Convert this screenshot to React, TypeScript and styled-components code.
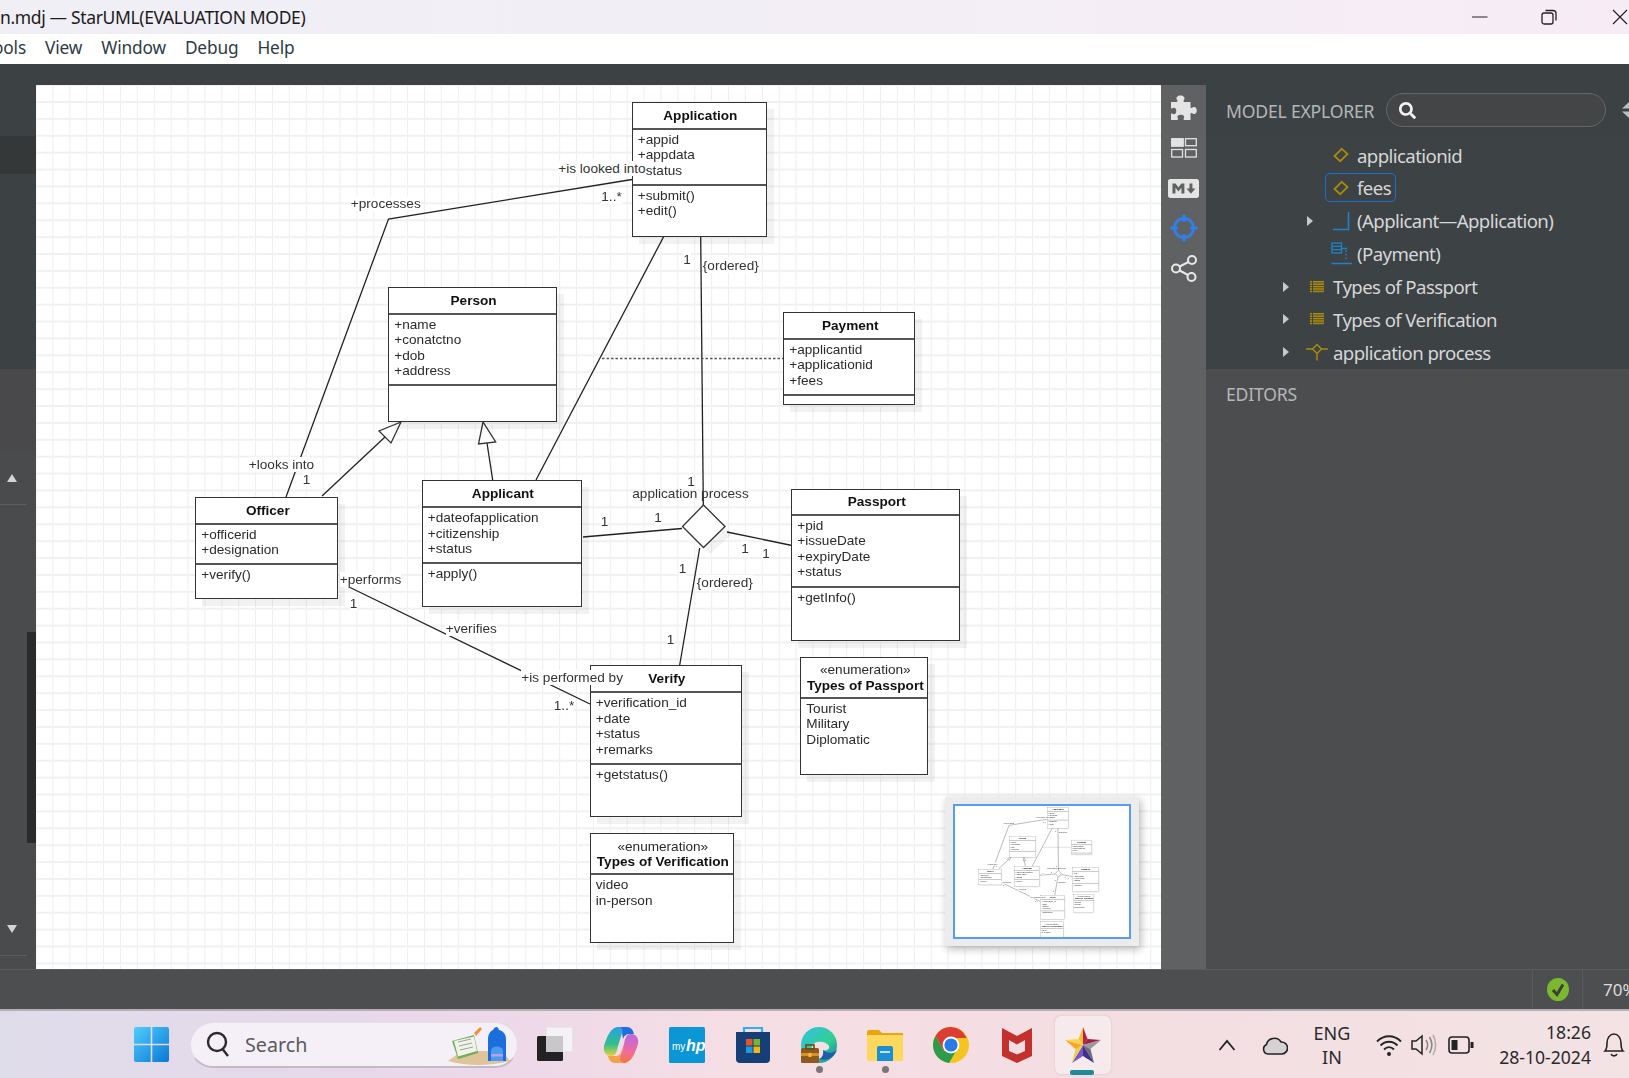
import React from "react";
import styled, { createGlobalStyle } from "styled-components";
import { FaMarkdown, FaSearch } from "react-icons/fa";

const Global = createGlobalStyle`
  html, body { margin: 0; padding: 0; overflow: hidden; background: #3c4144; }
  * { box-sizing: border-box; }
`;
const UI = `"Noto Sans", "Open Sans", sans-serif`;
const UML = `"Liberation Sans", Arial, sans-serif`;

const Page = styled.div`
  width: 1629px; height: 1078px; display: flex; flex-direction: column; overflow: hidden; font-family: ${UI};
`;
const TitleBar = styled.header`
  height: 34px; flex: none; display: flex; align-items: center; justify-content: space-between;
  background: linear-gradient(90deg, #f0eff6 0%, #f3eef6 55%, #f7ecf5 100%);
  font-size: 17.5px; letter-spacing: -0.35px; color: #1b1b1b; white-space: nowrap;
`;
const WindowButtons = styled.div`display: flex; align-items: center; padding-right: 1px;`;
const WinBtn = styled.span<{ $w: number }>`width: ${p => p.$w}px; height: 34px; display: flex; align-items: center; justify-content: flex-end;`;
const MenuBar = styled.nav`
  height: 30px; flex: none; background: #fff; display: flex; align-items: center; gap: 19px; margin-left: -7px; padding-bottom: 3px;
  font-size: 17.3px; color: #2c3a45; letter-spacing: -0.15px;
`;
const Strip = styled.div`height: 21px; flex: none; background: #3c4144;`;
const Main = styled.main`flex: none; height: 884px; display: flex;`;

const LeftPanel = styled.aside`width: 36px; flex: none; display: flex; flex-direction: column; background: #4a4b4d;`;
const LeftBand = styled.div<{ $h: number; $bg: string }>`height: ${p => p.$h}px; flex: none; background: ${p => p.$bg};`;
const LeftLower = styled.div`flex: 1; position: relative; display: flex; flex-direction: column; align-items: flex-start;`;
const ScrollArrow = styled.div<{ $down?: boolean; $mt: number }>`
  width: 0; height: 0; margin: ${p => p.$mt}px 0 0 7px;
  border-left: 5.5px solid transparent; border-right: 5.5px solid transparent;
  ${p => p.$down ? "border-top: 8px solid #d4d4d5;" : "border-bottom: 8px solid #d4d4d5;"}
`;
const ScrollRule = styled.div<{ $mt: number }>`width: 27px; height: 1px; background: #5c5d5f; margin-top: ${p => p.$mt}px;`;
const ScrollThumb = styled.div`width: 9px; height: 211px; margin: 127px 0 0 27px; background: #2a2a2b;`;

const Canvas = styled.section`
  width: 1125px; flex: none; position: relative; overflow: hidden; background-color: #fff;
  background-image:
    linear-gradient(#f1f1f1 2px, transparent 2px),
    linear-gradient(90deg, #eeeeee 1px, transparent 1px);
  background-size: 16.9px 16.9px;
  background-position: 16.4px 16px;
`;
const Layer = styled.div`position: absolute; left: -36.2px; top: -85px; width: 1629px; height: 1078px; filter: blur(0.3px);`;
const Edges = styled.svg`position: absolute; inset: 0; width: 1629px; height: 1078px;`;
const ClassBox = styled.div<{ $x: number; $y: number; $w: number; $h: number }>`
  position: absolute; left: ${p => p.$x}px; top: ${p => p.$y}px; width: ${p => p.$w}px; height: ${p => p.$h}px;
  display: flex; flex-direction: column; background: #fff; border: 1.5px solid #333;
  box-shadow: 7px 7px 0 rgba(0,0,0,.05); font: 13.6px/15.5px ${UML}; color: #2a2a2a;
`;
const ClassHead = styled.div<{ $h: number }>`
  height: ${p => p.$h}px; flex: none; display: flex; flex-direction: column; align-items: center; justify-content: center;
  border-bottom: 2px solid #555; white-space: nowrap; padding: 1px 0 0 2px;
`;
const ClassName = styled.b`font-weight: 700; color: #111;`;
const Compartment = styled.div<{ $h?: number }>`
  ${p => p.$h ? `height: ${p.$h}px; flex: none; border-bottom: 2px solid #555;` : "flex: 1;"}
  padding: 2.2px 0 0 5px; white-space: nowrap;
`;
const EdgeLabel = styled.span<{ $x: number; $y: number; $clear?: boolean }>`
  position: absolute; left: ${p => p.$x}px; top: ${p => p.$y - 7.5}px; font: 13.6px/15px ${UML}; color: #333;
  background: ${p => p.$clear ? "transparent" : "#fff"}; white-space: nowrap;
`;
const MiniMap = styled.div`
  position: absolute; left: 909px; top: 712px; width: 194px; height: 149px; padding: 7px 8px;
  background: #ececec; box-shadow: 2px 3px 8px rgba(0,0,0,.28); display: flex;
`;
const MiniView = styled.div`flex: 1; position: relative; overflow: hidden; background: #fff; border: 2px solid #5b9bf0;`;
const MiniScale = styled.div`position: absolute; left: -7.5px; top: -15.3px; transform-origin: 0 0; transform: scale(.157); width: 1629px; height: 1078px;`;

const Rail = styled.div`width: 45px; flex: none; background: #606163; display: flex; flex-direction: column; align-items: center; padding-top: 10px; gap: 14px; color: #e4e4e4;`;
const RailSlot = styled.span`height: 26px; display: flex; align-items: center; justify-content: center;`;
const RightPanel = styled.aside`flex: 1; display: flex; flex-direction: column; min-width: 0;`;
const ExplorerHead = styled.div`height: 51px; flex: none; background: #3c4144; display: flex; align-items: center; padding: 0 0 1px 20px;`;
const PanelTitle = styled.span`font-size: 17.6px; letter-spacing: -0.2px; color: #b4b7b8; white-space: nowrap; flex: none;`;
const HeadTitle = styled(PanelTitle)`padding-top: 2px;`;
const SearchPill = styled.div`
  width: 220px; height: 34px; margin-left: 12px; border: 1px solid #62676a; border-radius: 17px; background: #444546;
  display: flex; align-items: center; padding-left: 12px; color: #f2f2f2; flex: none;
`;
const SortArrows = styled.svg`margin-left: 16px; flex: none;`;
const Tree = styled.div`height: 233px; flex: none; background: #3d4245; padding-top: 2.6px; display: flex; flex-direction: column;`;
const TreeRow = styled.div<{ $depth: number }>`height: 32.9px; flex: none; display: flex; align-items: center; padding-left: ${p => 46 + p.$depth * 24}px;`;
const ToggleCell = styled.span`width: 20px; flex: none; display: flex; justify-content: center;`;
const Toggle = styled.i`width: 0; height: 0; border-top: 5.5px solid transparent; border-bottom: 5.5px solid transparent; border-left: 6px solid #c8c9ca;`;
const TreeItem = styled.span<{ $sel?: boolean }>`
  margin-left: 5px; height: 29px; display: inline-flex; align-items: center; padding-right: 4px; border-radius: 5px;
  border: 1px solid ${p => p.$sel ? "#1a6fd6" : "transparent"};
  font-size: 18.6px; letter-spacing: -0.58px; color: #d6d7d8; white-space: nowrap;
`;
const TreeIcon = styled.span`width: 30px; flex: none; display: flex; justify-content: center; align-items: center; margin-right: 1px;`;
const EditorsPanel = styled.div`flex: 1; background: #4c4d4f; padding: 13px 0 0 20px;`;

const StatusBar = styled.footer`height: 40px; flex: none; background: #4d4e50; border-top: 1px solid #5a5b5d; display: flex; justify-content: flex-end;`;
const StatusCell = styled.div<{ $w: number }>`width: ${p => p.$w}px; flex: none; border-left: 1px solid #595a5c; display: flex; align-items: center; padding-left: 14px;`;
const Zoom = styled.span`font-size: 17px; color: #dcdcdc; white-space: nowrap; margin-left: 6px;`;

const Taskbar = styled.div`
  flex: 1; display: flex; align-items: center; padding-left: 118px; border-top: 2px solid #b6b0b6;
  background: linear-gradient(90deg, #dfdcea 0%, #e5d9ea 18%, #ecd8e9 30%, #f5dee4 45%, #f3dee2 70%, #f3e3e5 100%);
`;
const Slot = styled.div`width: 66px; height: 67px; flex: none; position: relative; display: flex; align-items: center; justify-content: center;`;
const Tile = styled.div`position: absolute; left: 5px; top: 5px; width: 56px; height: 58px; background: #f6eaec; border-radius: 6px; box-shadow: 0 0 2px rgba(150,110,120,.35);`;
const RunDot = styled.i`position: absolute; left: 30px; bottom: 5px; width: 7px; height: 7px; border-radius: 50%; background: #7b7577;`;
const ActiveBar = styled.i`position: absolute; left: 20px; bottom: 3px; width: 24px; height: 5px; border-radius: 2px; background: #1f8a9a;`;
const SlotIcon = styled.svg`position: relative;`;
const SearchBox = styled.div`
  width: 328px; height: 46px; margin: 0 4px 0 6px; flex: none; border-radius: 23px; background: #f5f0f8; position: relative;
  border: 1px solid #e3dde6; border-bottom: 2px solid #c3bac6; display: flex; align-items: center; padding-left: 15px; gap: 15px;
  font-size: 19.7px; color: #5a5a5c;
`;
const SearchArt = styled.svg`position: absolute; right: 5px; top: 4px;`;
const TrayCell = styled.div<{ $w: number; $pad?: number }>`
  width: ${p => p.$w}px; height: 67px; flex: none; display: flex; align-items: center;
  ${p => p.$pad ? `justify-content: flex-end; padding-right: ${p.$pad}px;` : "justify-content: center;"}
`;
const Lang = styled.div`font-size: 18px; line-height: 24px; text-align: center; color: #2a2a2c;`;
const Clock = styled.div`width: 111px; flex: none; font-size: 17.6px; line-height: 25px; text-align: right; color: #2a2a2c; white-space: nowrap;`;
const Offset = styled.svg`margin-left: 8px;`;

type Cls = { x: number; y: number; w: number; h: number; head: number; attrH: number; stereo?: string; name: string; attrs: string[]; ops?: string[] };
const classes: Cls[] = [
  { x: 632, y: 101.5, w: 135, h: 135, head: 27, attrH: 56, name: "Application", attrs: ["+appid", "+appdata", "+status"], ops: ["+submit()", "+edit()"] },
  { x: 388.5, y: 286.5, w: 168.5, h: 135.5, head: 27, attrH: 71, name: "Person", attrs: ["+name", "+conatctno", "+dob", "+address"], ops: [] },
  { x: 783.5, y: 311.5, w: 132, h: 93, head: 27, attrH: 56, name: "Payment", attrs: ["+applicantid", "+applicationid", "+fees"], ops: [] },
  { x: 195.5, y: 496.5, w: 143, h: 102, head: 27, attrH: 40, name: "Officer", attrs: ["+officerid", "+designation"], ops: ["+verify()"] },
  { x: 422, y: 480, w: 160, h: 126.5, head: 27, attrH: 55.5, name: "Applicant", attrs: ["+dateofapplication", "+citizenship", "+status"], ops: ["+apply()"] },
  { x: 791.5, y: 488.5, w: 169, h: 152, head: 26, attrH: 72, name: "Passport", attrs: ["+pid", "+issueDate", "+expiryDate", "+status"], ops: ["+getInfo()"] },
  { x: 590, y: 665, w: 152, h: 152, head: 27, attrH: 71.5, name: "Verify", attrs: ["+verification_id", "+date", "+status", "+remarks"], ops: ["+getstatus()"] },
  { x: 800.5, y: 656.5, w: 128, h: 118, head: 41, attrH: 0, stereo: "«enumeration»", name: "Types of Passport", attrs: ["Tourist", "Military", "Diplomatic"] },
  { x: 590, y: 833, w: 144, h: 110, head: 41, attrH: 0, stereo: "«enumeration»", name: "Types of Verification", attrs: ["video", "in-person"] },
];
const labels: [string, number, number, boolean?][] = [
  ["+processes", 351, 203.5], ["+is looked into", 558.5, 168], ["1..*", 601.5, 196], ["1", 683.5, 259.5], ["{ordered}", 703, 265.5],
  ["+looks into", 249, 464], ["1", 303, 479], ["1", 687.5, 481, true], ["application process", 632.5, 493, true],
  ["1", 601, 521], ["1", 654.5, 517], ["1", 741.5, 548], ["1", 762.5, 553], ["1", 679, 568], ["{ordered}", 697, 582],
  ["1", 667, 639], ["+performs", 340, 579.5], ["1", 350, 603], ["+verifies", 446, 628.5], ["+is performed by", 521.5, 677.5], ["1..*", 554, 705.5],
];

const Diagram = ({ stroke = 1.3 }: { stroke?: number }) => (
  <>
    <Edges viewBox="0 0 1629 1078">
      <g fill="none" stroke="#222" strokeWidth={stroke}>
        <polyline points="286,497 388.5,219 632,179.5" />
        <line x1="322" y1="496" x2="385" y2="437" />
        <line x1="492.7" y1="480" x2="487" y2="443" />
        <line x1="536" y1="480" x2="664" y2="236" />
        <line x1="700.7" y1="236" x2="703.3" y2="505" />
        <line x1="583" y1="537" x2="682" y2="528.5" />
        <line x1="727" y1="532" x2="792" y2="545.5" />
        <line x1="699.7" y1="548" x2="679.7" y2="665" />
        <line x1="348" y1="586.5" x2="590" y2="704" />
        <line x1="602" y1="358.5" x2="783.5" y2="358.5" strokeDasharray="2.5 2" stroke="#555" />
      </g>
      <g fill="#fff" stroke="#333" strokeWidth={stroke}>
        <polygon points="401,422 379,431 391,443" />
        <polygon points="483,422 478.5,444 495.7,442" />
      </g>
      <polygon points="710,512 732,534 710,554 689,534" fill="#000" fillOpacity=".05" />
      <polygon points="703.5,505 725,526.5 703.5,547.5 682.5,526.5" fill="#fff" stroke="#333" strokeWidth={stroke} />
    </Edges>
    {classes.map(c => (
      <ClassBox key={c.name} $x={c.x} $y={c.y} $w={c.w} $h={c.h}>
        <ClassHead $h={c.head}>
          {c.stereo && <span>{c.stereo}</span>}
          <ClassName>{c.name}</ClassName>
        </ClassHead>
        <Compartment $h={c.attrH || undefined}>{c.attrs.map(a => <div key={a}>{a}</div>)}</Compartment>
        {c.ops && <Compartment>{c.ops.map(a => <div key={a}>{a}</div>)}</Compartment>}
      </ClassBox>
    ))}
    {labels.map(([t, x, y, clear], i) => <EdgeLabel key={i} $x={x} $y={y} $clear={clear}>{t}</EdgeLabel>)}
  </>
);

const gold = "#a88a0a";
const blue = "#1f82c9";
const AttrIcon = () => (
  <svg width="16" height="16" viewBox="0 0 16 16"><polygon points="8.8,1.8 14.5,7 7.2,14.2 1.5,9" fill="none" stroke={gold} strokeWidth="1.8" /></svg>
);
const LinkIcon = () => (
  <svg width="18" height="20" viewBox="0 0 18 20"><path d="M1 18.5H16.5V1" fill="none" stroke={blue} strokeWidth="1.6" /></svg>
);
const AssocClassIcon = () => (
  <svg width="24" height="24" viewBox="0 0 24 24" fill="none" stroke={blue} strokeWidth="1.3">
    <rect x="3" y="1" width="9.5" height="10" /><path d="M3 4.4H12.5M3 7.7H12.5" />
    <path d="M17 8V18" strokeDasharray="2 1.6" /><path d="M13 6.5H18M2.5 21.5H23" />
  </svg>
);
const EnumIcon = () => (
  <svg width="14" height="12" viewBox="0 0 14 12" fill={gold}>
    {[0, 2.4, 4.8, 7.2, 9.6].map(y => <g key={y}><rect x="0" y={y} width="2" height="1.6" /><rect x="3" y={y} width="11" height="1.6" /></g>)}
  </svg>
);
const ProcessIcon = () => (
  <svg width="24" height="18" viewBox="0 0 24 18" fill="none" stroke={gold} strokeWidth="1.5">
    <path d="M1 6H7.5M16.5 6H23M12 10.5V17.5" /><polygon points="12,1.5 16.5,6 12,10.5 7.5,6" />
  </svg>
);
const treeRows = [
  { depth: 2, text: "applicationid", icon: <AttrIcon /> },
  { depth: 2, text: "fees", icon: <AttrIcon />, sel: true },
  { depth: 2, text: "(Applicant—Application)", icon: <LinkIcon />, toggle: true },
  { depth: 2, text: "(Payment)", icon: <AssocClassIcon /> },
  { depth: 1, text: "Types of Passport", icon: <EnumIcon />, toggle: true },
  { depth: 1, text: "Types of Verification", icon: <EnumIcon />, toggle: true },
  { depth: 1, text: "application process", icon: <ProcessIcon />, toggle: true },
];

const PuzzleIcon = () => (
  <svg width="27" height="26" viewBox="0 0 27 26">
    <path d="M1 7H6.5C8 7 7.5 5.5 6.8 4.5C5.6 2.5 7.8 0.5 10.5 0.5C13.2 0.5 15.4 2.5 14.2 4.5C13.5 5.5 13 7 14.5 7H20.5V12C20.5 13.5 22 13 23 12.3C25 11.2 26.8 13 26.8 15.5C26.8 18 25 19.8 23 18.7C22 18 20.5 17.5 20.5 19V25H14.5C13 25 13.5 23.5 14 22.7C14.8 21 13 19.8 10.8 19.8C8.6 19.8 6.8 21 7.6 22.7C8.1 23.5 8.6 25 7 25H1V19.5C1 18 2.5 18.5 3.2 19C5 19.8 6.3 18.2 6.3 16C6.3 13.8 5 12.2 3.2 13C2.5 13.5 1 14 1 12.5Z" fill="#e4e4e4" />
  </svg>
);
const GridIcon = () => (
  <svg width="26" height="20" viewBox="0 0 26 20" fill="none" stroke="#e2e2e2" strokeWidth="1.3">
    <rect x="0.7" y="0.7" width="11.5" height="7.5" fill="#e2e2e2" /><rect x="14.5" y="0.7" width="10.8" height="7" />
    <rect x="0.7" y="11.5" width="10.8" height="7.5" /><rect x="14.5" y="11.5" width="10.8" height="7.5" />
  </svg>
);
const CrossIcon = () => (
  <svg width="28" height="28" viewBox="0 0 28 28" fill="none" stroke="#2f80ed" strokeWidth="2.8">
    <circle cx="14" cy="14" r="9.5" /><path d="M14 0.5V8M14 20V27.5M0.5 14H8M20 14H27.5" />
  </svg>
);
const ShareIcon = () => (
  <svg width="28" height="28" viewBox="0 0 28 28" fill="none" stroke="#e8e8e8" strokeWidth="2">
    <circle cx="22" cy="6" r="4" /><circle cx="6" cy="14.5" r="4" /><circle cx="21.5" cy="23" r="4" />
    <path d="M9.6 12.5L18.5 8M9.6 16.5L18 21" />
  </svg>
);

const StartIcon = () => (
  <SlotIcon width="35" height="35" viewBox="0 0 35 35">
    <defs><linearGradient id="w" x1="0" y1="0" x2="1" y2="1"><stop offset="0" stopColor="#4fcdfc" /><stop offset="1" stopColor="#0a78d6" /></linearGradient></defs>
    <path d="M2 0H16.7V16.7H0V2A2 2 0 0 1 2 0ZM18.3 0H33A2 2 0 0 1 35 2V16.7H18.3ZM0 18.3H16.7V35H2A2 2 0 0 1 0 33ZM18.3 18.3H35V33A2 2 0 0 1 33 35H18.3Z" fill="url(#w)" />
  </SlotIcon>
);
const TaskViewIcon = () => (
  <SlotIcon width="38" height="36" viewBox="0 0 38 36">
    <rect x="10" y="0" width="27" height="25" rx="1.5" fill="#f4f2f4" stroke="#dddadd" />
    <rect x="1" y="9" width="26" height="25" rx="1.5" fill="#222" />
    <rect x="10" y="9" width="17" height="16" fill="#c9c7c9" />
  </SlotIcon>
);
const CopilotIcon = () => (
  <SlotIcon width="36" height="38" viewBox="0 0 36 38">
    <defs>
      <linearGradient id="c1" x1="0" y1="0" x2="0" y2="1"><stop offset="0" stopColor="#2a9fe8" /><stop offset=".6" stopColor="#2fc08a" /><stop offset="1" stopColor="#e9d23a" /></linearGradient>
      <linearGradient id="c2" x1="0" y1="0" x2="0" y2="1"><stop offset="0" stopColor="#b56be0" /><stop offset=".6" stopColor="#f06aa0" /><stop offset="1" stopColor="#f5773a" /></linearGradient>
    </defs>
    <path d="M14 1C8 2 4 10 1 20C0 26 3 30 8 30C13 30 14 25 15 20L19 7C20 3 18 1 14 1Z" fill="url(#c1)" />
    <path d="M22 37C28 36 32 28 35 18C36 12 33 8 28 8C23 8 22 13 21 18L17 31C16 35 18 37 22 37Z" fill="url(#c2)" />
    <path d="M14 1H24C28 1 30 4 31 8H27C23 8 21 10 20 13L19 7C20 3 18 1 14 1Z" fill="#1f6fe0" />
    <path d="M12 30C16 30 18 28 19 24L21 22L17 31C16 35 18 37 22 37H12C8 37 6 34 5 30Z" fill="#f5a04a" />
  </SlotIcon>
);
const HpIcon = () => (
  <SlotIcon width="36" height="36" viewBox="0 0 36 36">
    <rect width="36" height="36" rx="1.5" fill="#0b96d6" />
    <text x="3" y="23" fill="#fff" fontFamily="Liberation Sans" fontSize="10">my</text>
    <text x="17" y="24" fill="#fff" fontFamily="Liberation Sans" fontStyle="italic" fontWeight="700" fontSize="16">hp</text>
  </SlotIcon>
);
const StoreIcon = () => (
  <SlotIcon width="36" height="38" viewBox="0 0 36 38">
    <path d="M9 7V2H27V7" fill="none" stroke="#2bb2ea" strokeWidth="2.2" />
    <path d="M1 6H35V33A4 4 0 0 1 31 37H5A4 4 0 0 1 1 33Z" fill="#163f78" />
    <rect x="11" y="13" width="6.5" height="6.5" fill="#e8512a" /><rect x="18.5" y="13" width="6.5" height="6.5" fill="#75b82a" />
    <rect x="11" y="20.5" width="6.5" height="6.5" fill="#1a9be0" /><rect x="18.5" y="20.5" width="6.5" height="6.5" fill="#f5b40f" />
  </SlotIcon>
);
const EdgeIcon = () => (
  <SlotIcon width="38" height="38" viewBox="0 0 38 38">
    <defs><linearGradient id="e1" x1="0" y1="0" x2="1" y2="1"><stop offset="0" stopColor="#35c1e8" /><stop offset=".6" stopColor="#2fd08f" /><stop offset="1" stopColor="#1d6fb0" /></linearGradient></defs>
    <circle cx="19" cy="19" r="18" fill="url(#e1)" />
    <path d="M12 20C14 15 25 14 29 20C30 23 27 25 23 24C25 29 23 33 19 33C14 32 11 26 12 20Z" fill="#f5dee4" />
    <path d="M19 33C28 36 35 30 37 24C34 27 28 28 23 24C24 28 22 32 19 33Z" fill="#1c5fa8" />
    <rect x="1" y="22" width="18" height="15" rx="1.5" fill="#8c5a1e" /><rect x="1" y="27" width="18" height="3" fill="#d8902a" />
    <rect x="6" y="19" width="8" height="4" fill="none" stroke="#6f4614" strokeWidth="1.6" /><rect x="8.5" y="27" width="3" height="4" fill="#f3c03d" />
  </SlotIcon>
);
const FilesIcon = () => (
  <SlotIcon width="36" height="32" viewBox="0 0 36 32">
    <path d="M0 3A2 2 0 0 1 2 1H12L15 4H36V30H0Z" fill="#e8a50e" />
    <rect x="0" y="6" width="36" height="26" rx="1" fill="#fcd95e" />
    <path d="M10 19A2 2 0 0 1 12 17H24A2 2 0 0 1 26 19V32H10Z" fill="#1b8fd6" /><rect x="13" y="22" width="10" height="2" fill="#bfe5fa" />
  </SlotIcon>
);
const ChromeIcon = () => (
  <SlotIcon width="36" height="36" viewBox="0 0 36 36">
    <circle cx="18" cy="18" r="18" fill="#f5c51f" />
    <path d="M18 0A18 18 0 0 0 2.4 9L11 24L18 11H33.6A18 18 0 0 0 18 0Z" fill="#db3d33" />
    <path d="M2.4 9A18 18 0 0 0 16 35.9L24.5 21.5L11 24Z" fill="#2d9b4b" />
    <circle cx="18" cy="18" r="8.4" fill="#fff" /><circle cx="18" cy="18" r="6.6" fill="#2a7be8" />
  </SlotIcon>
);
const McAfeeIcon = () => (
  <SlotIcon width="32" height="36" viewBox="0 0 32 36">
    <path d="M16 36L1 29V1L16 9L31 1V29ZM8 24L16 27.5L24 24V13L16 17.5L8 13Z" fill="#c4302b" fillRule="evenodd" />
  </SlotIcon>
);
const StarIcon = () => (
  <SlotIcon width="36" height="36" viewBox="0 0 36 36">
    <polygon points="18,0 18,18 13.5,12" fill="#f4c22d" />
    <polygon points="18,0 22.5,12 18,18" fill="#b8204c" />
    <polygon points="22.5,12 36,13 18,18" fill="#a31f3f" />
    <polygon points="36,13 25.5,22 18,18" fill="#9a9a9c" />
    <polygon points="25.5,22 29,36 18,18" fill="#6e6e72" />
    <polygon points="29,36 18,29 18,18" fill="#3f2f8f" />
    <polygon points="18,29 7,36 18,18" fill="#7a55c8" />
    <polygon points="7,36 10.5,22 18,18" fill="#e9d24a" />
    <polygon points="10.5,22 0,13 18,18" fill="#f7a823" />
    <polygon points="0,13 13.5,12 18,18" fill="#f7d552" />
  </SlotIcon>
);
const NAV = "#232325";

export default function App() {
  return (
    <Page>
      <Global />
      <TitleBar>
        <span>n.mdj — StarUML(EVALUATION MODE)</span>
        <WindowButtons>
          <WinBtn $w={70}><svg width="16" height="16" viewBox="0 0 16 16"><path d="M0 8H15.5" stroke="#222" strokeWidth="1" /></svg></WinBtn>
          <WinBtn $w={69}><svg width="16" height="16" viewBox="0 0 16 16" fill="none" stroke="#222" strokeWidth="1.3"><rect x="1" y="4" width="11" height="11" rx="2" /><path d="M4.5 1.5H12A3 3 0 0 1 15 4.5V11.5" /></svg></WinBtn>
          <WinBtn $w={71}><svg width="16" height="16" viewBox="0 0 16 16"><path d="M1 1L15 15M15 1L1 15" stroke="#222" strokeWidth="1.2" /></svg></WinBtn>
        </WindowButtons>
      </TitleBar>
      <MenuBar>
        <span>ools</span><span>View</span><span>Window</span><span>Debug</span><span>Help</span>
      </MenuBar>
      <Strip />
      <Main>
        <LeftPanel>
          <LeftBand $h={51} $bg="#3c4144" />
          <LeftBand $h={38} $bg="#353839" />
          <LeftBand $h={195} $bg="#3c4144" />
          <LeftBand $h={82} $bg="#49494b" />
          <LeftLower>
            <ScrollArrow $mt={23} />
            <ScrollRule $mt={22} />
            <ScrollThumb />
            <ScrollArrow $down $mt={82} />
            <ScrollRule $mt={22} />
          </LeftLower>
        </LeftPanel>
        <Canvas>
          <Layer><Diagram /></Layer>
          <MiniMap aria-hidden="true">
            <MiniView><MiniScale><Diagram stroke={2} /></MiniScale></MiniView>
          </MiniMap>
        </Canvas>
        <Rail>
          <RailSlot><PuzzleIcon /></RailSlot>
          <RailSlot><GridIcon /></RailSlot>
          <RailSlot><FaMarkdown size={31} /></RailSlot>
          <RailSlot><CrossIcon /></RailSlot>
          <RailSlot><ShareIcon /></RailSlot>
        </Rail>
        <RightPanel>
          <ExplorerHead>
            <HeadTitle>MODEL EXPLORER</HeadTitle>
            <SearchPill><FaSearch size={17} /></SearchPill>
            <SortArrows width="10" height="18" viewBox="0 0 10 18"><path d="M0 7.5L8 0V7.5ZM0 10.5H8V18Z" fill="#bdbebf" /></SortArrows>
          </ExplorerHead>
          <Tree>
            {treeRows.map(r => (
              <TreeRow key={r.text} $depth={r.depth}>
                <ToggleCell>{r.toggle && <Toggle />}</ToggleCell>
                <TreeItem $sel={r.sel}>
                  <TreeIcon>{r.icon}</TreeIcon>
                  {r.text}
                </TreeItem>
              </TreeRow>
            ))}
          </Tree>
          <EditorsPanel><PanelTitle>EDITORS</PanelTitle></EditorsPanel>
        </RightPanel>
      </Main>
      <StatusBar>
        <StatusCell $w={50}>
          <svg width="22" height="23" viewBox="0 0 22 23"><ellipse cx="11" cy="11.5" rx="11" ry="11.5" fill="#7cb82f" /><path d="M6 12L10 16.5L16 6.5" fill="none" stroke="#3b3f3a" strokeWidth="3" /></svg>
        </StatusCell>
        <StatusCell $w={47}><Zoom>70%</Zoom></StatusCell>
      </StatusBar>
      <Taskbar>
        <Slot><StartIcon /></Slot>
        <SearchBox>
          <svg width="24" height="26" viewBox="0 0 24 26" fill="none" stroke="#2b2b2d" strokeWidth="2.4"><circle cx="11" cy="11" r="9" /><path d="M16.5 18L22 25" /></svg>
          <span>Search</span>
          <SearchArt width="68" height="38" viewBox="0 0 68 38">
            <path d="M4 34L18 24H58L66 34Q50 38 34 38T4 34Z" fill="#dfc49a" />
            <path d="M8 14L30 8L34 26L14 32Z" fill="#6cae5a" /><path d="M10 14L30 9.5L33 24L14 29.5Z" fill="#f1f3ea" />
            <path d="M14 15L27 12M15 19L28 16M16 23L29 20" stroke="#9aa39a" strokeWidth="1" />
            <path d="M30 6L36 0L38 2L32 9Z" fill="#f0903a" />
            <path d="M44 34V12C44 6 48 3 49 3C51 -1 54 -1 55 3C57 3 62 6 62 12V34Z" fill="#1b6fdc" />
            <path d="M47 34V24C47 18 59 18 59 24V34Z" fill="#4d9bf0" /><rect x="47" y="27" width="12" height="2.5" fill="#b7a0e8" />
          </SearchArt>
        </SearchBox>
        <Slot><TaskViewIcon /></Slot>
        <Slot><CopilotIcon /></Slot>
        <Slot><HpIcon /></Slot>
        <Slot><StoreIcon /></Slot>
        <Slot><EdgeIcon /><RunDot /></Slot>
        <Slot><FilesIcon /><RunDot /></Slot>
        <Slot><ChromeIcon /></Slot>
        <Slot><McAfeeIcon /></Slot>
        <Slot><Tile /><StarIcon /><ActiveBar /></Slot>
        <TrayCell $w={133} $pad={13}>
          <svg width="18" height="12" viewBox="0 0 18 12"><path d="M1.5 11L9 2L16.5 11" fill="none" stroke={NAV} strokeWidth="1.8" /></svg>
        </TrayCell>
        <TrayCell $w={52}>
          <svg width="26" height="20" viewBox="0 0 26 20"><path d="M6 19A5 5 0 0 1 4.5 9.5A8 8 0 0 1 19 7A6 6 0 0 1 20 19Z" fill="#d6d2d4" stroke={NAV} strokeWidth="1.6" /></svg>
        </TrayCell>
        <TrayCell $w={62}><Lang>ENG<br />IN</Lang></TrayCell>
        <TrayCell $w={43}>
          <Offset width="26" height="24" viewBox="0 0 26 24" fill="none" stroke={NAV} strokeWidth="1.8"><path d="M1 8.5C8 1.5 18 1.5 25 8.5M4.5 12.5C9.5 7.5 16.5 7.5 21.5 12.5M8 16.5C11 13.5 15 13.5 18 16.5" /><circle cx="13" cy="21" r="2" fill={NAV} stroke="none" /></Offset>
        </TrayCell>
        <TrayCell $w={36}>
          <svg width="26" height="26" viewBox="0 0 26 26" fill="none" stroke={NAV} strokeWidth="1.5"><path d="M1 9H5L11 4V22L5 17H1Z" /><path d="M15 8C17 11 17 15 15 18M18.5 5C21.5 10 21.5 16 18.5 21" stroke="#8a8688" /><path d="M22 3C25.5 9 25.5 17 22 23" stroke="#b0acae" /></svg>
        </TrayCell>
        <TrayCell $w={38}>
          <svg width="26" height="18" viewBox="0 0 26 18" fill="none" stroke={NAV} strokeWidth="1.6"><rect x="1" y="1" width="20" height="16" rx="3" /><rect x="3.5" y="4" width="6" height="10" fill={NAV} stroke="none" /><rect x="22.5" y="6" width="3" height="6" fill={NAV} stroke="none" /></svg>
        </TrayCell>
        <Clock>18:26<br />28-10-2024</Clock>
        <TrayCell $w={38}>
          <Offset width="22" height="26" viewBox="0 0 22 26" fill="none" stroke={NAV} strokeWidth="1.6"><path d="M2 19C4 17 4 15 4 11C4 6 7 2 11 2C15 2 18 6 18 11C18 15 18 17 20 19Z" /><path d="M8 22C9 24.5 13 24.5 14 22" /></Offset>
        </TrayCell>
      </Taskbar>
    </Page>
  );
}
